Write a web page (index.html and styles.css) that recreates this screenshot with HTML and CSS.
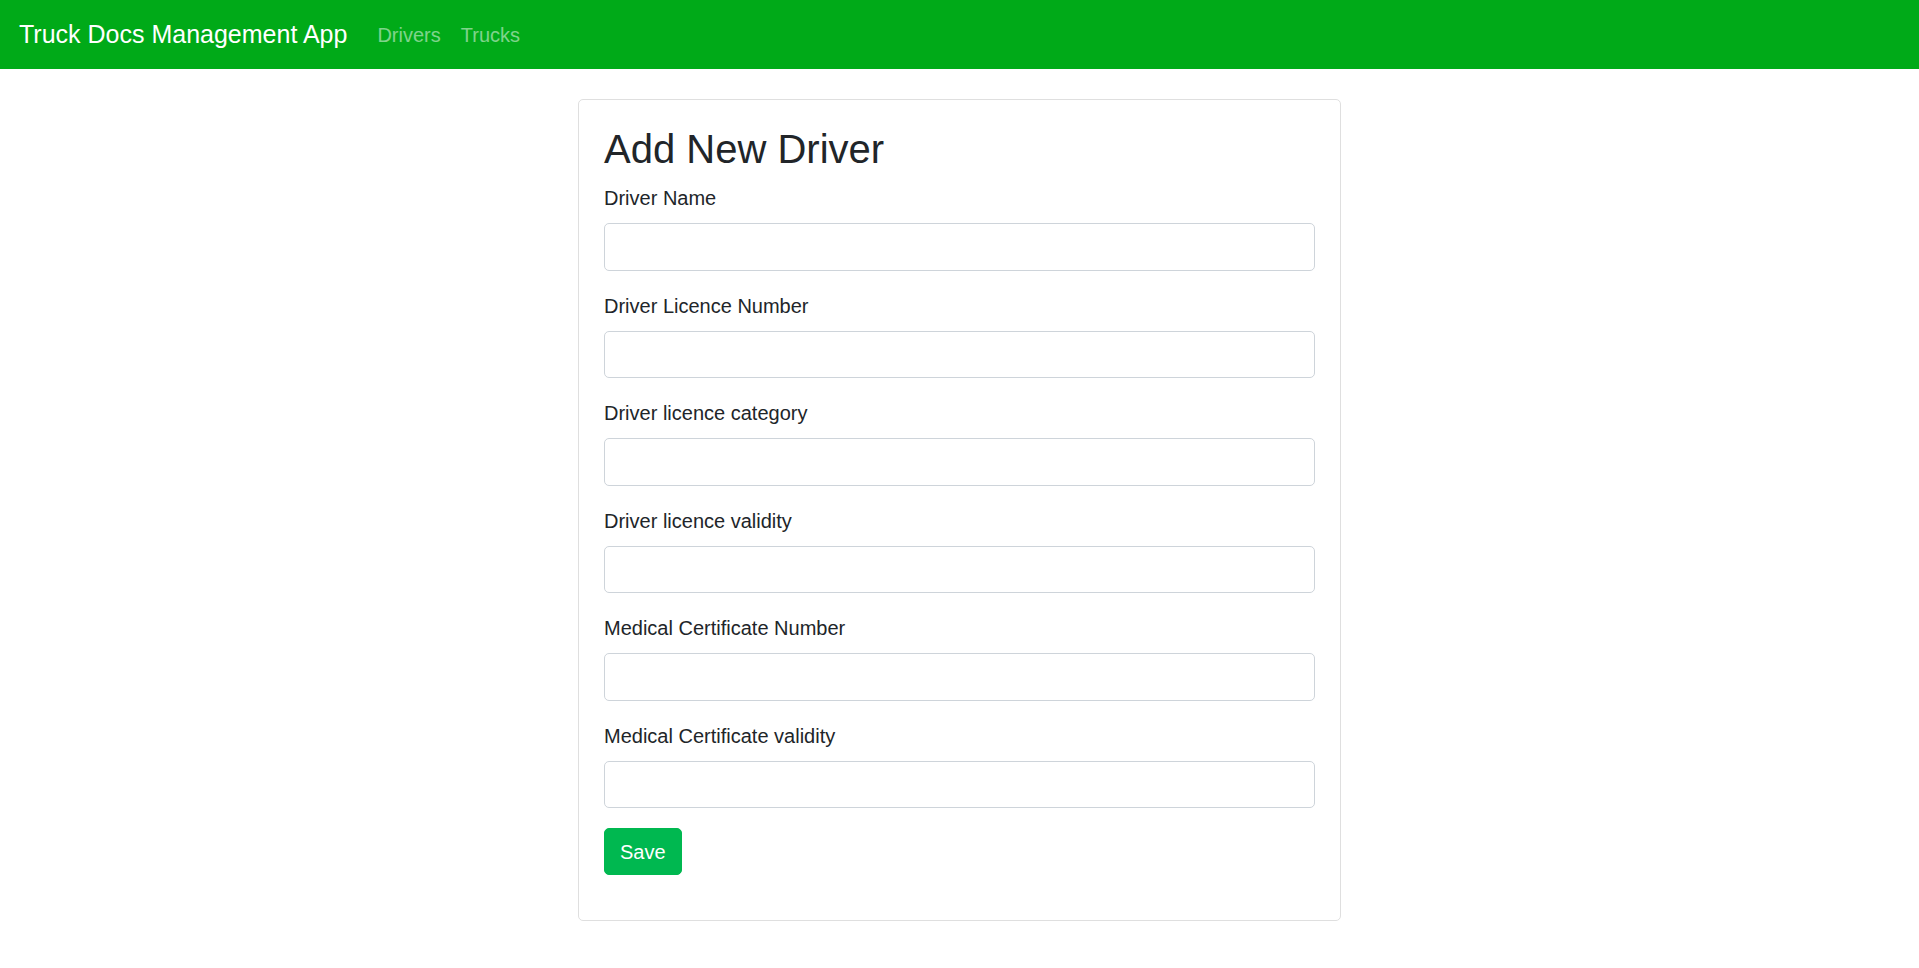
FILE: index.html
```html
<!DOCTYPE html>
<html lang="en">
<head>
<meta charset="utf-8">
<title>Truck Docs Management App</title>
<link rel="stylesheet" href="styles.css">
</head>
<body>
<nav class="navbar">
  <a class="brand" href="#">Truck Docs Management App</a>
  <ul class="nav">
    <li><a class="nav-link" href="#">Drivers</a></li>
    <li><a class="nav-link" href="#">Trucks</a></li>
  </ul>
</nav>
<main class="main">
  <div class="card">
    <h2 class="title">Add New Driver</h2>
    <form class="form">
      <div class="group">
        <label class="label" for="name">Driver Name</label>
        <input class="input" id="name" type="text">
      </div>
      <div class="group">
        <label class="label" for="lic">Driver Licence Number</label>
        <input class="input" id="lic" type="text">
      </div>
      <div class="group">
        <label class="label" for="cat">Driver licence category</label>
        <input class="input" id="cat" type="text">
      </div>
      <div class="group">
        <label class="label" for="val">Driver licence validity</label>
        <input class="input" id="val" type="text">
      </div>
      <div class="group">
        <label class="label" for="med">Medical Certificate Number</label>
        <input class="input" id="med" type="text">
      </div>
      <div class="group">
        <label class="label" for="medval">Medical Certificate validity</label>
        <input class="input" id="medval" type="text">
      </div>
      <button class="btn" type="button">Save</button>
    </form>
  </div>
</main>
</body>
</html>
```

FILE: styles.css
```css
* { box-sizing: border-box; }
html, body { margin: 0; padding: 0; }
body {
  font-family: "Liberation Sans", Arial, sans-serif;
  color: #212529;
  background: #fff;
}
.navbar {
  display: flex;
  align-items: center;
  height: 69px;
  padding: 0 19px;
  background: #00aa18;
}
.brand {
  color: #fff;
  text-decoration: none;
  font-size: 25px;
  line-height: 1.5;
  margin-right: 20px;
}
.nav {
  display: flex;
  list-style: none;
  margin: 0;
  padding: 0;
}
.nav-link {
  display: block;
  padding: 0 10px;
  font-size: 20px;
  line-height: 1.5;
  color: rgba(255, 255, 255, 0.5);
  text-decoration: none;
}
.main {
  display: flex;
  justify-content: center;
  padding-top: 30px;
}
.card {
  width: 763px;
  border: 1px solid #dfdfdf;
  border-radius: 5px;
  padding: 25px 25px 45px;
}
.title {
  margin: 0 0 10px;
  font-size: 40px;
  font-weight: 400;
  line-height: 1.2;
}
.form { margin: 0; }
.group { margin-bottom: 20px; }
.label {
  display: block;
  margin-bottom: 10px;
  font-size: 20px;
  line-height: 1.5;
}
.input {
  display: block;
  width: 100%;
  height: 47.5px;
  padding: 7.5px 15px;
  font-family: inherit;
  font-size: 20px;
  border: 1px solid #ced4da;
  border-radius: 5px;
  background: #fff;
  color: #495057;
}
.btn {
  display: inline-block;
  padding: 7.5px 15px;
  font-family: inherit;
  font-size: 20px;
  line-height: 1.5;
  color: #fff;
  background: #00b850;
  border: 1px solid #00b850;
  border-radius: 5px;
  cursor: pointer;
}
```
